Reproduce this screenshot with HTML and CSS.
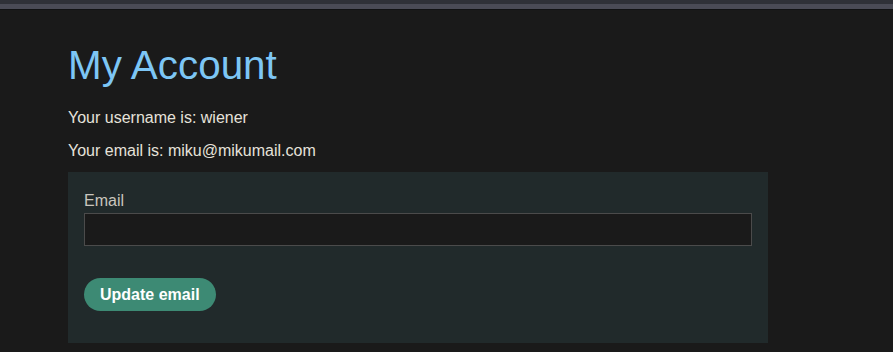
FILE: index.html
```html
<!DOCTYPE html>
<html>
<head>
<meta charset="utf-8">
<link rel="stylesheet" href="styles.css">
</head>
<body>
<div class="topbar"><div class="topbar-a"></div><div class="topbar-b"></div><div class="topbar-c"></div></div>
<main class="container">
  <h1 class="title">My Account</h1>
  <p class="info">Your username is: wiener</p>
  <p class="info">Your email is: miku@mikumail.com</p>
  <form class="card">
    <label class="label" for="email">Email</label>
    <input class="input" id="email" type="email">
    <button class="button" type="button">Update email</button>
  </form>
</main>
</body>
</html>
```
FILE: styles.css
```css
* { box-sizing: border-box; }
html, body { margin: 0; padding: 0; }
body {
  background: #1a1a1a;
  font-family: "Liberation Sans", Arial, sans-serif;
  color: #e6e2da;
  height: 352px;
  overflow: hidden;
}
.topbar-a { height: 4px; background: #2f3138; }
.topbar-b { height: 5px; background: #4a4b56; }
.topbar-c { height: 1px; background: #111214; }
.container {
  padding: 0 0 0 68px;
  width: 768px;
  box-sizing: content-box;
}
.title {
  margin: 0;
  padding-top: 32px;
  font-size: 40.4px;
  font-weight: normal;
  line-height: 46px;
  color: #7dc6f5;
}
.info {
  margin: 0;
  font-size: 16px;
  line-height: 18px;
  margin-top: 15px;
}
.info:first-of-type { margin-top: 21px; }
.card {
  margin-top: 12px;
  width: 700px;
  background: #212a2b;
  padding: 20px 16px 32px;
  display: flex;
  flex-direction: column;
}
.label {
  font-size: 16px;
  line-height: 18px;
  color: #c9c5bd;
  margin-bottom: 3px;
}
.input {
  height: 33px;
  width: 100%;
  background: #1a1a1a;
  border: 1px solid #4b4b4b;
  margin: 0;
  padding: 0 8px;
  color: #e6e2da;
  font: 16px "Liberation Sans", Arial, sans-serif;
}
.button {
  align-self: flex-start;
  margin-top: 32px;
  height: 33px;
  padding: 0 16px;
  border: none;
  border-radius: 17px;
  background: #3d8a74;
  color: #ffffff;
  font: bold 16px "Liberation Sans", Arial, sans-serif;
}
```
